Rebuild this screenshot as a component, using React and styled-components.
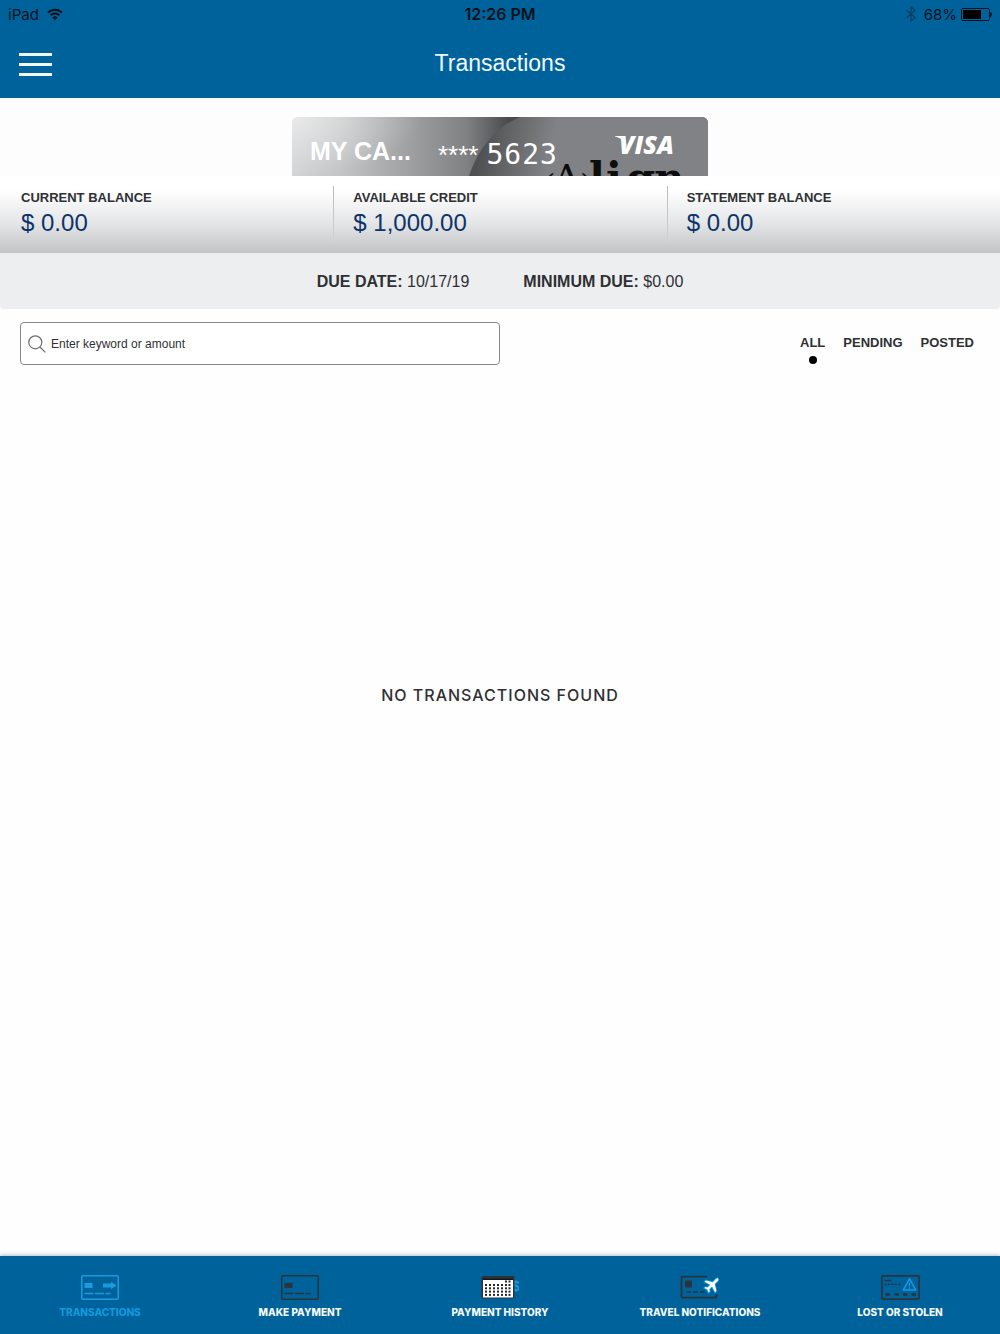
import React, { useState } from 'react'
import styled, { createGlobalStyle } from 'styled-components'

const GlobalStyle = createGlobalStyle`
    * {
        box-sizing: border-box;
    }
    body {
        margin: 0;
        background-color: #fefefe;
        color: #2f3033;
        font-family: 'Liberation Sans', Arial, sans-serif;
    }
    button {
        border: none;
        padding: 0;
        background: none;
        font: inherit;
        color: inherit;
        cursor: pointer;
    }
`

const Page = styled.div`
    min-height: 100vh;
    display: flex;
    flex-direction: column;
`

const Header = styled.header`
    background-color: #00629b;
`

const StatusBar = styled.div`
    display: grid;
    grid-template-columns: 1fr auto 1fr;
    align-items: center;
    height: 28px;
    padding: 0 8px;
    color: #04121c;
    font-family: Inter, sans-serif;
    font-size: 15px;
`

const StatusGroup = styled.div`
    display: flex;
    align-items: center;
    gap: ${p => p.gap || '8px'};
    justify-content: ${p => p.justify || 'flex-start'};
`

const Clock = styled.span`
    font-size: 16px;
    font-weight: 600;
`

const TitleBar = styled.div`
    display: grid;
    grid-template-columns: 1fr auto 1fr;
    align-items: center;
    height: 70px;
    padding: 0 19px;
`

const MenuButton = styled.button`
    display: flex;
    flex-direction: column;
    gap: 7px;
    width: 33px;
    padding-top: 2px;
`

const MenuLine = styled.span`
    height: 3px;
    background-color: #f2f9fc;
`

const Title = styled.h1`
    margin: 0;
    color: #f2f9fc;
    font-size: 23px;
    font-weight: 400;
    line-height: 28px;
`

const CardStrip = styled.section`
    display: flex;
    justify-content: center;
    height: 78px;
    padding-top: 19px;
    background-color: #fdfdfe;
    overflow: hidden;
`

const Card = styled.div`
    position: relative;
    width: 100%;
    max-width: 416px;
    border-radius: 6px 6px 0 0;
    overflow: hidden;
`

const CardArt = styled.svg`
    position: absolute;
    inset: 0;
    width: 100%;
    height: 100%;
`

const CardInfo = styled.div`
    position: relative;
    display: flex;
    align-items: flex-start;
    height: 100%;
    padding: 16px 34px 0 18px;
    color: #fff;
`

const CardName = styled.span`
    padding-top: 4px;
    font-size: 25px;
    font-weight: 700;
    line-height: 28px;
`

const CardMask = styled.span`
    margin-left: 27px;
    padding-top: 8px;
    font-size: 26px;
    line-height: 28px;
`

const CardDigits = styled.span`
    margin-left: 8px;
    padding-top: 8px;
    font-family: 'DejaVu Sans Mono', monospace;
    font-size: 28px;
    line-height: 28px;
    letter-spacing: 1px;
`

const Balances = styled.dl`
    display: grid;
    grid-template-columns: repeat(3, 1fr);
    height: 77px;
    margin: 0;
    padding: 10px 0;
    background: linear-gradient(#fff 18%, #e4e5e7 62%, #c2c3c5);
`

const Balance = styled.div`
    padding: 1px 0 0 21px;
    & + & {
        padding-left: 20px;
        background: linear-gradient(#b9babc, #d2d3d5) left / 1px 100% no-repeat;
    }
`

const BalanceLabel = styled.dt`
    font-size: 13px;
    font-weight: 700;
    line-height: 22px;
`

const BalanceValue = styled.dd`
    margin: 0;
    color: #0d3468;
    font-size: 24px;
    line-height: 28px;
`

const DueBar = styled.div`
    display: flex;
    justify-content: center;
    align-items: center;
    gap: 54px;
    height: 56px;
    padding-top: 2px;
    border-radius: 0 0 4px 4px;
    background-color: #edeef0;
    font-size: 16px;
`

const Filters = styled.div`
    display: flex;
    justify-content: space-between;
    align-items: flex-start;
    padding: 13px 26px 0 20px;
`

const SearchBox = styled.label`
    display: flex;
    align-items: center;
    gap: 5px;
    width: 60%;
    max-width: 480px;
    height: 43px;
    padding: 0 7px;
    border: 1px solid #85878a;
    border-radius: 4px;
    background-color: #fff;
`

const SearchInput = styled.input`
    flex: 1;
    min-width: 0;
    border: none;
    padding: 0;
    outline: none;
    background: none;
    font-family: inherit;
    font-size: 12px;
    color: #2f3033;
    &::placeholder {
        color: #2f3033;
        opacity: 1;
    }
`

const FilterGroup = styled.div`
    display: flex;
    gap: 18px;
    padding-top: 13px;
`

const FilterButton = styled.button`
    display: flex;
    flex-direction: column;
    align-items: center;
    gap: 5px;
    font-size: 13px;
    font-weight: 700;
    line-height: 16px;
    &::after {
        content: '';
        width: 8px;
        height: 8px;
        border-radius: 50%;
        background-color: ${p => p.$active ? '#000' : 'transparent'};
    }
`

const Content = styled.main`
    flex: 1;
    padding: 320px 20px 20px;
    text-align: center;
`

const EmptyMessage = styled.p`
    margin: 0;
    font-family: Inter, sans-serif;
    font-size: 16px;
    font-weight: 500;
    line-height: 20px;
    letter-spacing: 1px;
`

const TabBar = styled.nav`
    display: grid;
    grid-template-columns: repeat(5, 1fr);
    height: 78px;
    background-color: #00629b;
    box-shadow: 0 0 5px #9aa4ad;
`

const Tab = styled.a`
    display: flex;
    flex-direction: column;
    align-items: center;
    gap: 5px;
    padding-top: 19px;
    color: ${p => p.$active ? '#1499dc' : '#f4fafd'};
    font-family: Inter, sans-serif;
    font-size: 10px;
    font-weight: 800;
    line-height: 14px;
    text-decoration: none;
    white-space: nowrap;
`

const DARK = '#2b343b'
const BLUE = '#1a9be0'

const WifiIcon = () => (
    <svg width="16" height="13" viewBox="0 0 16 13" fill="none" stroke="#04121c" strokeWidth="2">
        <path d="M1 4.6a10 10 0 0 1 14 0" />
        <path d="M3.5 7.3a6.4 6.4 0 0 1 9 0" />
        <path d="M8 12.2 5.4 9.5a3.8 3.8 0 0 1 5.2 0z" fill="#04121c" stroke="none" />
    </svg>
)

const BluetoothIcon = () => (
    <svg width="14" height="16" viewBox="0 0 14 16" fill="none" stroke="#0b3f63" strokeWidth="1.3">
        <path d="M.6 4.2 9 11.6 5 15.2V.8l4 3.6-8.4 7.4" />
    </svg>
)

const BatteryIcon = () => (
    <svg width="31" height="13" viewBox="0 0 31 13">
        <rect x=".5" y=".5" width="28" height="12" rx="1.5" fill="none" stroke="#04121c" />
        <rect x="2" y="2" width="18" height="9" fill="#000" />
        <path d="M29.2 4c2.200 .4 2.200 4.600 0 5z" fill="#04121c" />
    </svg>
)

const SearchIcon = () => (
    <svg width="18" height="18" viewBox="0 0 18 18" fill="none" stroke="#6b6d70" strokeWidth="1.2">
        <circle cx="7.300" cy="7.300" r="6.500" />
        <path d="m12 12 5.300 5.300" />
    </svg>
)

const CardBackground = () => (
    <CardArt viewBox="0 0 416 59" preserveAspectRatio="xMidYMin slice" aria-hidden="true">
        <defs>
            <linearGradient id="silver" x1="0" y1="0" x2="1" y2="0">
                <stop offset="0" stopColor="#d3d4d6" />
                <stop offset=".12" stopColor="#c3c4c5" />
                <stop offset=".3" stopColor="#9b9c9e" />
                <stop offset=".42" stopColor="#808183" />
                <stop offset=".52" stopColor="#4a4b4d" />
                <stop offset="1" stopColor="#4a4b4d" />
            </linearGradient>
            <linearGradient id="disc" gradientUnits="userSpaceOnUse" x1="185" y1="40" x2="255" y2="54">
                <stop offset="0" stopColor="#4e4f51" />
                <stop offset=".4" stopColor="#636466" />
                <stop offset="1" stopColor="#818285" />
            </linearGradient>
            <radialGradient id="shine" cx="0" cy="0" r="1">
                <stop offset="0" stopColor="#fff" stopOpacity=".5" />
                <stop offset="1" stopColor="#fff" stopOpacity="0" />
            </radialGradient>
        </defs>
        <rect width="416" height="59" fill="url(#silver)" />
        <rect width="130" height="59" fill="url(#shine)" />
        <path d="M177 59C184 38 199 12 228 0H416V59z" fill="url(#disc)" />
        <g fill="#0d0d0e" fontFamily="'DejaVu Serif', serif">
            <text x="251" y="80" fontSize="32">(</text>
            <text x="261" y="74" fontSize="38">A</text>
            <text x="288" y="80" fontSize="32">)</text>
            <text x="297 314 334 362" y="76" fontSize="42" fontWeight="700">lign</text>
        </g>
    </CardArt>
)

const VisaMark = styled.svg`
    flex-shrink: 0;
    margin-left: auto;
`

const VisaLogo = () => (
    <VisaMark width="62" height="24" viewBox="0 0 62 24" fill="#fff">
        <path d="M3 3H12.500L15 14C12 8 8 4.500 3 3.600z" />
        <text x="7" y="21" fontFamily="'Open Sans', sans-serif" fontSize="25" fontWeight="800" fontStyle="italic">VISA</text>
    </VisaMark>
)

const TransactionsIcon = () => (
    <svg width="38" height="25" viewBox="0 0 38 25" fill={BLUE}>
        <rect x=".75" y=".75" width="36.500" height="23.500" rx="1" fill="none" stroke={BLUE} strokeWidth="1.500" />
        <rect x="3.500" y="8" width="8" height="5" />
        <path d="M22 8.500h8V6.800l5.500 3.700-5.500 3.700v-1.700h-8z" />
        <path d="M3.500 18.500h9M14 18.500h9M24.500 18.500h5" stroke={BLUE} strokeWidth="1.400" />
    </svg>
)

const PaymentIcon = () => (
    <svg width="38" height="25" viewBox="0 0 38 25" fill={DARK}>
        <rect x=".75" y=".75" width="36.500" height="23.500" rx="1" fill="none" stroke={DARK} strokeWidth="1.500" />
        <rect x="3.500" y="8" width="8" height="5" />
        <path d="M3.500 18.500h9M14 18.500h9M24.500 18.500h5" stroke={DARK} strokeWidth="1.400" />
    </svg>
)

const HistoryIcon = () => {
    const rows = [6.5, 10, 13.3, 16.6, 19.9]
    return (
        <svg width="38" height="25" viewBox="0 0 38 25">
            <text x="31" y="16" fill={BLUE} fontFamily="'Liberation Sans', sans-serif" fontSize="14">$</text>
            <rect x=".5" y="1" width="33" height="22.500" rx="1.500" fill={DARK} />
            <rect x="2" y="5" width="30" height="17.500" fill="#fff" />
            <rect x="2" y="3.500" width="30" height="1.500" fill="#15191c" />
            {rows.map((y, row) =>
                [5, 9, 13, 17, 21, 25, 28.5].map((x, col) =>
                    (row > 0 || col > 4) &&
                    <rect key={`${x}-${y}`} x={x - 1} y={y - 1} width="2" height="2" fill="#222a30" />
                )
            )}
        </svg>
    )
}

const TravelIcon = () => (
    <svg width="40" height="25" viewBox="0 0 40 25" fill={DARK}>
        <path d="M27 1.700H2.500q-1 0-1 1v19q0 1 1 1h33q1 0 1-1V19" fill="none" stroke={DARK} strokeWidth="1.800" />
        <rect x="5" y="5.500" width="7" height="7" rx="1" />
        <path d="M6 17h5M13 17h5M20 17h5" stroke={DARK} strokeWidth="1.600" />
        <path
            d="M38 3.500c.8.800.2 2-.7 2.900l-2.600 2.600 1.700 7-1.300 1.200-3.100-5.600-2.700 2.600.4 2.200-1 1-1.500-2.800-2.800-1.500 1-1 2.200.4 2.600-2.700-5.600-3.100L25.800 5.500l7 1.700 2.600-2.600c.9-.9 2-1.800 2.600-1.100z"
            fill="#fff"
            stroke={BLUE}
            strokeWidth="1.600"
            paintOrder="stroke"
        />
    </svg>
)

const LostIcon = () => (
    <svg width="39" height="25" viewBox="0 0 39 25" fill={DARK}>
        <rect x=".9" y=".9" width="37.200" height="23.200" rx="1" fill="none" stroke={DARK} strokeWidth="1.600" />
        <path d="M3.500 5.500h7" stroke={DARK} strokeWidth="1.400" />
        <path d="M3.500 9.300h17" stroke={DARK} strokeWidth="1.300" strokeDasharray="2.200 1.200" />
        <path d="M4.500 19.500h4.500M13.500 19.500h4.500M22 19.500h4.500M30.500 19.500h4.500" stroke={DARK} strokeWidth="2.600" />
        <path d="M28.500 3.800 34.800 15H22.200z" fill="#00629b" stroke={BLUE} strokeWidth="1.500" strokeLinejoin="round" />
        <path d="M28.500 7.500v4M28.500 12.400v1.300" stroke={BLUE} strokeWidth="1.400" />
    </svg>
)

const balances = [
    { label: 'CURRENT BALANCE', value: '$ 0.00' },
    { label: 'AVAILABLE CREDIT', value: '$ 1,000.00' },
    { label: 'STATEMENT BALANCE', value: '$ 0.00' },
]

const filters = ['ALL', 'PENDING', 'POSTED']

const tabs = [
    { label: 'TRANSACTIONS', Icon: TransactionsIcon },
    { label: 'MAKE PAYMENT', Icon: PaymentIcon },
    { label: 'PAYMENT HISTORY', Icon: HistoryIcon },
    { label: 'TRAVEL NOTIFICATIONS', Icon: TravelIcon },
    { label: 'LOST OR STOLEN', Icon: LostIcon },
]

const App = () => {
    const [filter, setFilter] = useState('ALL')
    const [keyword, setKeyword] = useState('')

    return (
        <>
            <GlobalStyle />
            <Page>
                <Header>
                    <StatusBar>
                        <StatusGroup>
                            <span>iPad</span>
                            <WifiIcon />
                        </StatusGroup>
                        <Clock>12:26 PM</Clock>
                        <StatusGroup gap='4px' justify='flex-end'>
                            <BluetoothIcon />
                            <span>68%</span>
                            <BatteryIcon />
                        </StatusGroup>
                    </StatusBar>
                    <TitleBar>
                        <MenuButton aria-label='Menu'>
                            <MenuLine />
                            <MenuLine />
                            <MenuLine />
                        </MenuButton>
                        <Title>Transactions</Title>
                    </TitleBar>
                </Header>
                <CardStrip>
                    <Card>
                        <CardBackground />
                        <CardInfo>
                            <CardName>MY CA...</CardName>
                            <CardMask>****</CardMask>
                            <CardDigits>5623</CardDigits>
                            <VisaLogo />
                        </CardInfo>
                    </Card>
                </CardStrip>
                <Balances>
                    {balances.map(item =>
                        <Balance key={item.label}>
                            <BalanceLabel>{item.label}</BalanceLabel>
                            <BalanceValue>{item.value}</BalanceValue>
                        </Balance>
                    )}
                </Balances>
                <DueBar>
                    <span><b>DUE DATE:</b> 10/17/19</span>
                    <span><b>MINIMUM DUE:</b> $0.00</span>
                </DueBar>
                <Filters>
                    <SearchBox>
                        <SearchIcon />
                        <SearchInput
                            aria-label='Search transactions'
                            placeholder='Enter keyword or amount'
                            value={keyword}
                            onChange={e => setKeyword(e.target.value)}
                        />
                    </SearchBox>
                    <FilterGroup>
                        {filters.map(name =>
                            <FilterButton
                                key={name}
                                $active={name === filter}
                                onClick={() => setFilter(name)}
                            >
                                {name}
                            </FilterButton>
                        )}
                    </FilterGroup>
                </Filters>
                <Content>
                    <EmptyMessage>NO TRANSACTIONS FOUND</EmptyMessage>
                </Content>
                <TabBar>
                    {tabs.map(({ label, Icon }, idx) =>
                        <Tab key={label} href='#' $active={idx === 0}>
                            <Icon />
                            {label}
                        </Tab>
                    )}
                </TabBar>
            </Page>
        </>
    )
}

export default App
